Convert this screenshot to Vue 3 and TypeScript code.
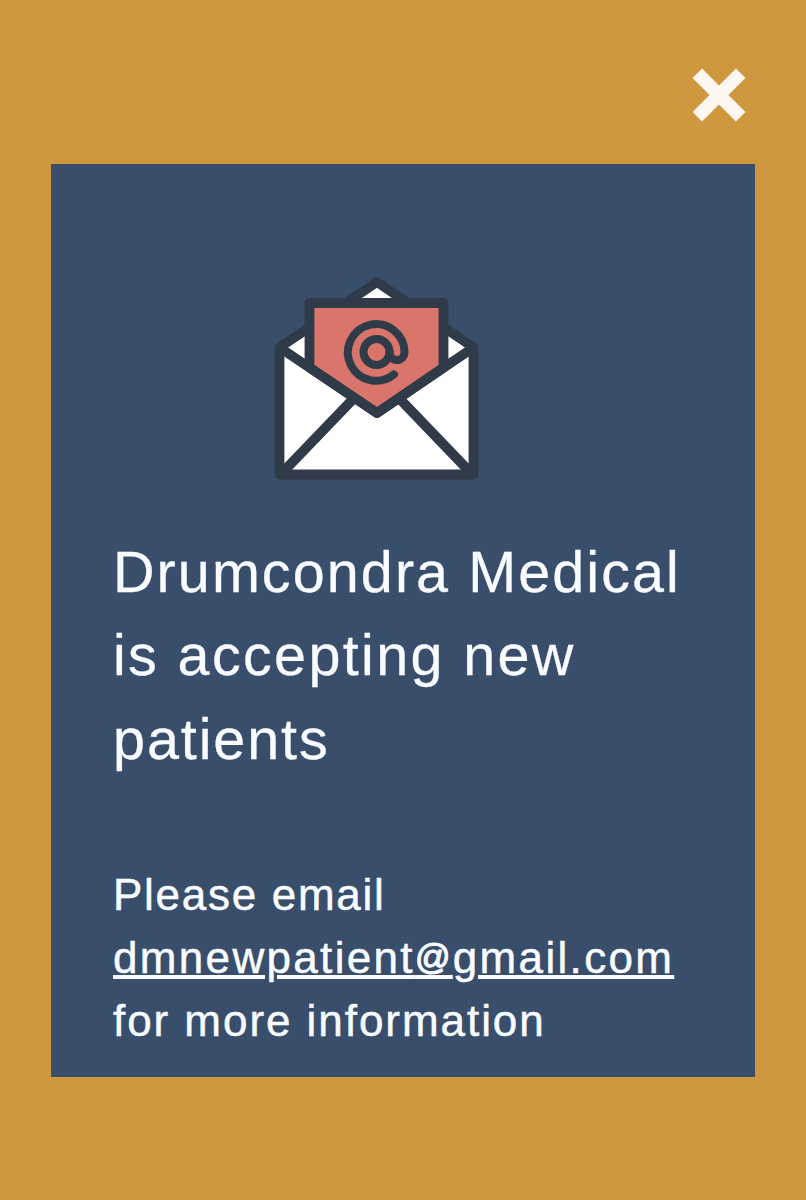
<script setup lang="ts">
import { ref } from 'vue'

const open = ref<boolean>(true)
</script>

<template>
  <main class="page">
    <header class="bar">
      <button class="close" type="button" aria-label="Close" @click="open = false">
        <svg width="54" height="54" viewBox="0 0 54 54">
          <path d="M5.3 5.3 48.7 48.7M48.7 5.3 5.3 48.7" />
        </svg>
      </button>
    </header>
    <section v-if="open" class="panel">
      <svg class="envelope" width="206" height="206" viewBox="274 275 206 206">
        <path class="paper" d="M279.5 347.5 377 282 473.5 347.5V474.5H279.5Z" />
        <path class="line" d="M283 472 357 395M470 472 396 395" />
        <path class="letter" d="M309.5 303H443.5V367.5L377 413 309.5 367.5Z" />
        <path class="line" d="M279.5 347.5 377 413 473.5 347.5" />
        <path
          class="at"
          d="M394 374.400A28.300 28.300 0 1 1 404.500 352A7.500 8 0 0 1 389.500 352"
        />
        <circle class="at" cx="376.500" cy="352" r="13" />
      </svg>
      <h1 class="title">
        <span class="row first">Drumcondra Medical</span>
        <span class="row second">is accepting new</span>
        <span class="row third">patients</span>
      </h1>
      <p class="note">
        <span class="row please">Please email</span>
        <a class="row mail" href="mailto:dmnewpatient@gmail.com">dmnewpatient<span class="sign">@</span>gmail.com</a>
        <span class="row more">for more information</span>
      </p>
    </section>
  </main>
</template>

<style>
body {
  background: #cf973e;
}
</style>

<style scoped>
.page {
  box-sizing: border-box;
  height: 1200px;
  padding: 0 51px;
  overflow: hidden;
  background: #cf973e;
  font-family: "Liberation Sans", Arial, sans-serif;
}
.bar {
  display: flex;
  justify-content: flex-end;
  box-sizing: border-box;
  height: 164px;
  padding: 68px 9px 0 0;
}
.close {
  width: 54px;
  height: 54px;
  padding: 0;
  border: 0;
  background: none;
}
.close svg {
  display: block;
}
.close path {
  fill: none;
  stroke: #fdf7f1;
  stroke-width: 13.4;
}
.panel {
  box-sizing: border-box;
  width: 704px;
  height: 913px;
  padding: 111px 0 0 62px;
  background: #394e6a;
  color: #f8fbff;
}
.envelope {
  display: block;
  margin-left: 161px;
}
.envelope path,
.envelope circle {
  stroke: #2f3b49;
  stroke-width: 9.8;
  stroke-linejoin: round;
}
.envelope .paper {
  fill: #fff;
}
.envelope .letter {
  fill: #da756c;
}
.envelope .line {
  fill: none;
}
.envelope .at {
  fill: none;
  stroke-width: 8;
  stroke-linecap: round;
}
.row {
  display: block;
  width: max-content;
  white-space: nowrap;
}
.title {
  margin: 50px 0 0;
  font-size: 57.500px;
  font-weight: 400;
  line-height: 83.300px;
  -webkit-text-stroke: 0.300px #f8fbff;
}
.first {
  letter-spacing: 2.080px;
}
.second {
  letter-spacing: 2.350px;
}
.third {
  letter-spacing: 1.900px;
}
.note {
  margin: 82px 0 0;
  font-size: 44px;
  line-height: 63px;
  -webkit-text-stroke: 0.500px #f8fbff;
}
.please {
  letter-spacing: 1.720px;
}
.more {
  letter-spacing: 1.950px;
}
.mail {
  color: inherit;
  letter-spacing: 2.330px;
  text-decoration: underline;
  text-decoration-thickness: 3.500px;
  text-underline-offset: 2px;
}
.sign {
  font-size: 35px;
  line-height: 0;
  vertical-align: 4px;
  -webkit-text-stroke-width: 1.200px;
}
</style>
